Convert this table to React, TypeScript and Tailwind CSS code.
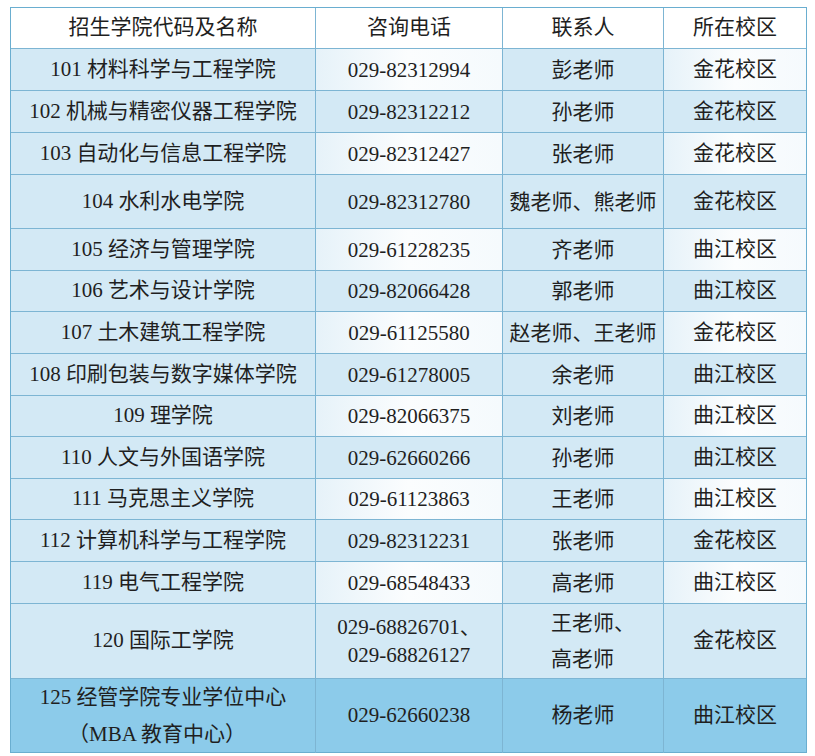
import React from "react";

type Row = {
  code: string;
  name: string;
  phones: string[];
  contacts: string[];
  campus: string;
  h: string;
};

const rows: Row[] = [
  { code: "101", name: "材料科学与工程学院", phones: ["029-82312994"], contacts: ["彭老师"], campus: "金花校区", h: "h-[42px]" },
  { code: "102", name: "机械与精密仪器工程学院", phones: ["029-82312212"], contacts: ["孙老师"], campus: "金花校区", h: "h-[42px]" },
  { code: "103", name: "自动化与信息工程学院", phones: ["029-82312427"], contacts: ["张老师"], campus: "金花校区", h: "h-[42px]" },
  { code: "104", name: "水利水电学院", phones: ["029-82312780"], contacts: ["魏老师、熊老师"], campus: "金花校区", h: "h-[54px]" },
  { code: "105", name: "经济与管理学院", phones: ["029-61228235"], contacts: ["齐老师"], campus: "曲江校区", h: "h-[42px]" },
  { code: "106", name: "艺术与设计学院", phones: ["029-82066428"], contacts: ["郭老师"], campus: "曲江校区", h: "h-[41px]" },
  { code: "107", name: "土木建筑工程学院", phones: ["029-61125580"], contacts: ["赵老师、王老师"], campus: "金花校区", h: "h-[42px]" },
  { code: "108", name: "印刷包装与数字媒体学院", phones: ["029-61278005"], contacts: ["余老师"], campus: "曲江校区", h: "h-[42px]" },
  { code: "109", name: "理学院", phones: ["029-82066375"], contacts: ["刘老师"], campus: "曲江校区", h: "h-[41px]" },
  { code: "110", name: "人文与外国语学院", phones: ["029-62660266"], contacts: ["孙老师"], campus: "曲江校区", h: "h-[42px]" },
  { code: "111", name: "马克思主义学院", phones: ["029-61123863"], contacts: ["王老师"], campus: "曲江校区", h: "h-[41px]" },
  { code: "112", name: "计算机科学与工程学院", phones: ["029-82312231"], contacts: ["张老师"], campus: "金花校区", h: "h-[42px]" },
  { code: "119", name: "电气工程学院", phones: ["029-68548433"], contacts: ["高老师"], campus: "曲江校区", h: "h-[42px]" },
  { code: "120", name: "国际工学院", phones: ["029-68826701、", "029-68826127"], contacts: ["王老师、", "高老师"], campus: "金花校区", h: "h-[75px]" },
];

const blue = "bg-[#d3e9f5]";
const pale = "bg-gradient-to-r from-[#e6f2f9] via-[#fbfdfe] to-[#f5fafd]";
const cell = "flex flex-col items-center justify-center text-center border-r border-[#7db5d3]";

export default function App() {
  return (
    <div className="min-h-screen bg-white pt-[7px] pl-[10px] text-[21px] text-[#1f1f1f] font-['Liberation_Serif','Times_New_Roman','DejaVu_Serif','Noto_Sans_CJK_SC',serif]">
      <div className="w-[797px] border border-[#6aaed0]">
        {/* header */}
        <div className="grid grid-cols-[305px_187px_161px_142px] h-[41px] border-b border-[#7db5d3] bg-white">
          <div className={cell}>招生学院代码及名称</div>
          <div className={cell}>咨询电话</div>
          <div className={cell}>联系人</div>
          <div className="flex items-center justify-center">所在校区</div>
        </div>

        {rows.map((r, i) => {
          const alt = i % 2 === 1 ? blue : pale;
          return (
            <div
              key={r.code}
              className={`grid grid-cols-[305px_187px_161px_142px] ${r.h} border-b border-[#7db5d3]`}
            >
              <div className={`${cell} ${blue}`}>
                <span>
                  {r.code} {r.name}
                </span>
              </div>
              <div className={`${cell} ${alt} leading-[28px]`}>
                {r.phones.map((p) => (
                  <span key={p}>{p}</span>
                ))}
              </div>
              <div className={`${cell} ${blue} leading-[36px]`}>
                {r.contacts.map((c) => (
                  <span key={c} className={r.contacts.length > 1 ? "self-start pl-[48px]" : ""}>
                    {c}
                  </span>
                ))}
              </div>
              <div className={`flex items-center justify-center ${alt}`}>{r.campus}</div>
            </div>
          );
        })}

        {/* last row */}
        <div className="grid grid-cols-[305px_187px_161px_142px] h-[73px] bg-[#8ccbea]">
          <div className={`${cell} leading-[37px]`}>
            <span>125 经管学院专业学位中心</span>
            <span className="-ml-[12px]">（MBA 教育中心）</span>
          </div>
          <div className={cell}>029-62660238</div>
          <div className={cell}>杨老师</div>
          <div className="flex items-center justify-center">曲江校区</div>
        </div>
      </div>
    </div>
  );
}
